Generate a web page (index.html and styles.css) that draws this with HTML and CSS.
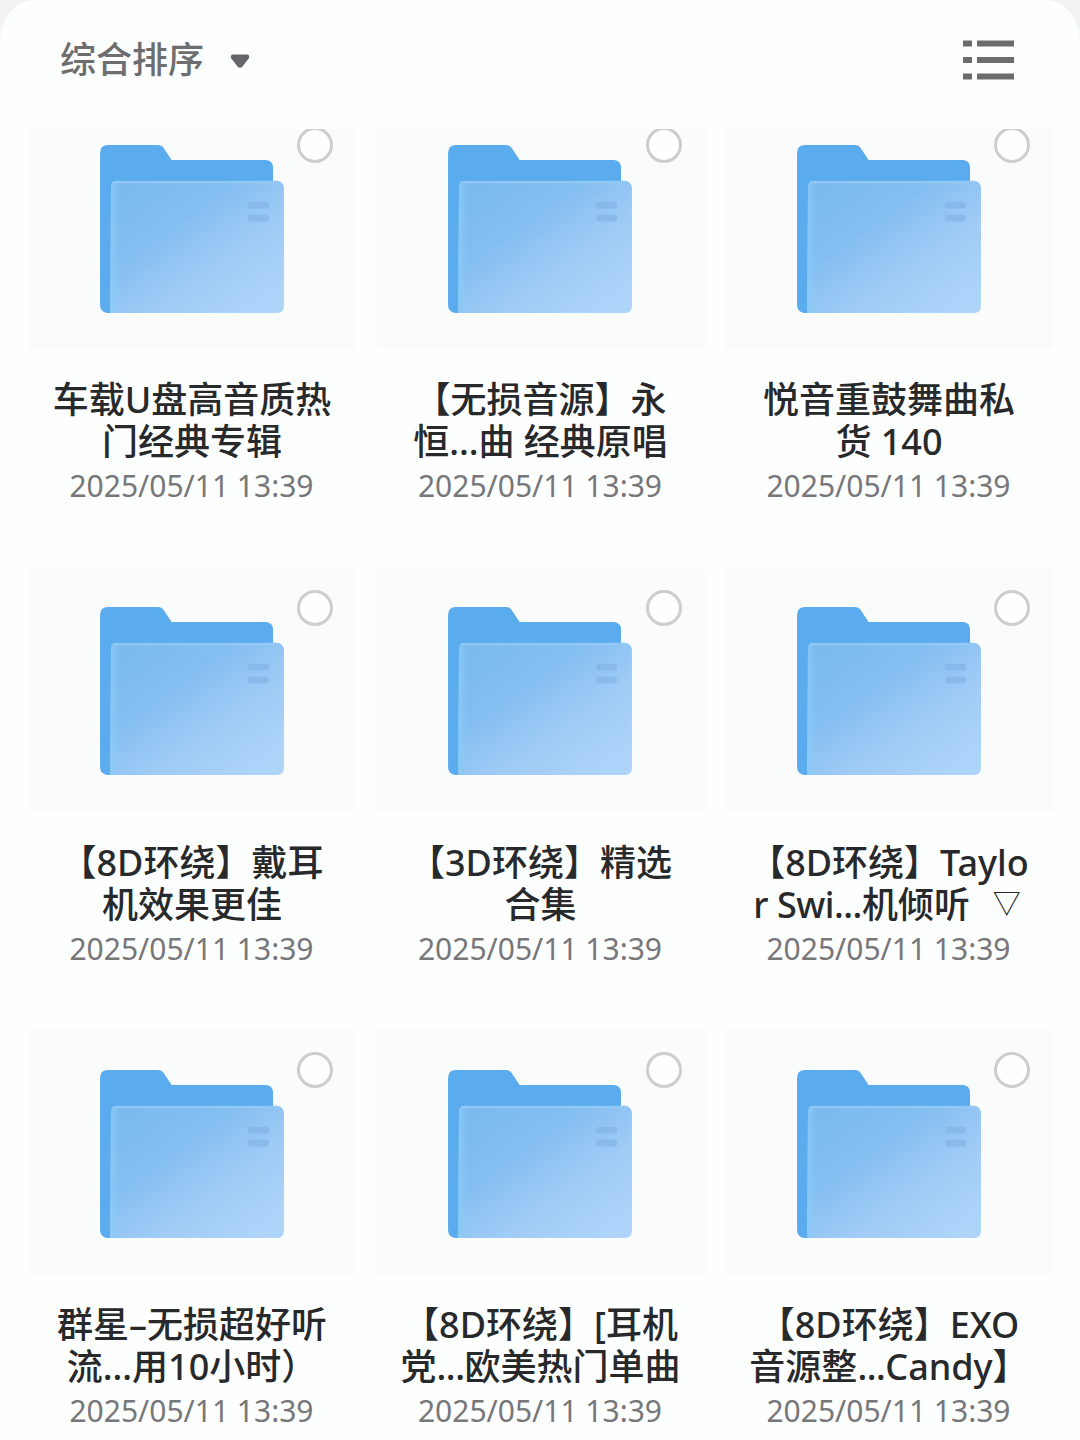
FILE: index.html
```html
<!DOCTYPE html>
<html lang="zh-CN">
<head>
<meta charset="utf-8">
<title>综合排序</title>
<link rel="stylesheet" href="styles.css">
</head>
<body>
<svg class="defs" width="0" height="0" aria-hidden="true">
  <defs>
    <linearGradient id="front" x1="0.08" y1="0.1" x2="0.88" y2="0.95">
      <stop offset="0" stop-color="#7bb9ef"/>
      <stop offset="0.3" stop-color="#83bef0"/>
      <stop offset="0.65" stop-color="#9fcbf6"/>
      <stop offset="1" stop-color="#aed4fa"/>
    </linearGradient>
    <linearGradient id="edge" x1="0" y1="0" x2="1" y2="0">
      <stop offset="0" stop-color="#8bcbf7" stop-opacity="0.9"/>
      <stop offset="1" stop-color="#8bcbf7" stop-opacity="0"/>
    </linearGradient>
    <filter id="soft" x="-20%" y="-50%" width="140%" height="200%"><feGaussianBlur stdDeviation="0.8"/></filter>
    <symbol id="folder" viewBox="0 0 186 170">
      <path d="M0 8Q0 0 8 0H58Q62 0 64 3L72 15H167Q174 15.500 174 23V80H30V169H7Q0 168 0 161Z" fill="#5aacee"/>
      <path d="M11 42Q11 36 17 36H178Q185 37 185 44V162Q185 169 178 169H10Z" fill="url(#front)"/>
      <path d="M11 42Q11 36 17 36H20V169H10Z" fill="url(#edge)"/>
      <path d="M13 37.500H179" stroke="#93c9f6" stroke-width="2"/>
      <g fill="#7eafe3" opacity="0.55" filter="url(#soft)">
        <rect x="149" y="57" width="21" height="7" rx="3"/>
        <rect x="149" y="70" width="21" height="7" rx="3"/>
      </g>
    </symbol>
  </defs>
</svg>
<main class="panel">
  <header class="toolbar">
    <div class="sort">
      <span>综合排序</span>
      <svg class="caret" width="20" height="15" viewBox="0 0 20 15"><path d="M2.500 .500H17.500Q20 1.500 19 4L12.500 12.500Q10 15 7.500 12.500L1 4Q0 1.500 2.500 .500Z" fill="#666668"/></svg>
    </div>
    <svg class="view" width="51" height="40" viewBox="0 0 51 40" fill="#6c6c6e"><path d="M0 .500h9v6H0zM14 .500h37v6H14zM0 17h9v6H0zM14 17h37v6H14zM0 33.500h9v6H0zM14 33.500h37v6H14z"/></svg>
  </header>
  <div class="viewport">
    <div class="grid">
      <article class="item"><div class="tile"><svg class="folder"><use href="#folder"/></svg><span class="check"></span></div><h2>车载U盘高音质热<br>门经典专辑</h2><time>2025/05/11 13:39</time></article>
      <article class="item"><div class="tile"><svg class="folder"><use href="#folder"/></svg><span class="check"></span></div><h2>【无损音源】永<br>恒...曲 经典原唱</h2><time>2025/05/11 13:39</time></article>
      <article class="item"><div class="tile"><svg class="folder"><use href="#folder"/></svg><span class="check"></span></div><h2>悦音重鼓舞曲私<br>货 140</h2><time>2025/05/11 13:39</time></article>
      <article class="item"><div class="tile"><svg class="folder"><use href="#folder"/></svg><span class="check"></span></div><h2>【8D环绕】戴耳<br>机效果更佳</h2><time>2025/05/11 13:39</time></article>
      <article class="item"><div class="tile"><svg class="folder"><use href="#folder"/></svg><span class="check"></span></div><h2>【3D环绕】精选<br>合集</h2><time>2025/05/11 13:39</time></article>
      <article class="item"><div class="tile"><svg class="folder"><use href="#folder"/></svg><span class="check"></span></div><h2>【8D环绕】Taylo<br><span class="tight">r Swi...</span>机倾听&nbsp; <span class="mark">▽</span></h2><time>2025/05/11 13:39</time></article>
      <article class="item"><div class="tile"><svg class="folder"><use href="#folder"/></svg><span class="check"></span></div><h2>群星–无损超好听<br>流...用10小时）</h2><time>2025/05/11 13:39</time></article>
      <article class="item"><div class="tile"><svg class="folder"><use href="#folder"/></svg><span class="check"></span></div><h2>【8D环绕】[耳机<br>党<span class="tight">...</span>欧美热门单曲</h2><time>2025/05/11 13:39</time></article>
      <article class="item"><div class="tile"><svg class="folder"><use href="#folder"/></svg><span class="check"></span></div><h2>【8D环绕】EXO<br>音源整<span class="tight">...</span>Candy】</h2><time>2025/05/11 13:39</time></article>
    </div>
  </div>
</main>
</body>
</html>
```
FILE: styles.css
```css
* { box-sizing: border-box; }
body {
  margin: 0;
  height: 1440px;
  overflow: hidden;
  background: #f3f3f5;
  font-family: "Noto Sans", "Noto Sans CJK SC", sans-serif;
  text-spacing-trim: space-all;
}
.defs { position: absolute; }
.panel {
  display: flex;
  flex-direction: column;
  height: 1440px;
  overflow: hidden;
  border-radius: 34px 34px 0 0 / 42px 42px 0 0;
  background: #fdfefe;
}
.toolbar {
  display: flex;
  flex: none;
  align-items: center;
  justify-content: space-between;
  height: 129px;
  padding: 0 66px 9px 60px;
}
.sort {
  display: flex;
  align-items: center;
  gap: 26px;
  font-size: 36px;
  font-weight: 500;
  line-height: 42px;
  color: #6e6e70;
}
.caret { margin-top: 3px; }
.viewport {
  flex: 1;
  min-height: 0;
  overflow: hidden;
}
.grid {
  display: grid;
  grid-template-columns: repeat(3, 330px);
  grid-auto-rows: 462.5px;
  column-gap: 18.5px;
  margin-top: -25px;
  padding-left: 27px;
}
.item { text-align: center; }
.tile {
  position: relative;
  height: 246px;
  padding: 40.5px 0 0 72.5px;
  border-radius: 6px;
  background: #fafbfb;
}
.folder {
  display: block;
  width: 185px;
  height: 169px;
}
.check {
  position: absolute;
  top: 23px;
  right: 24px;
  width: 36px;
  height: 36px;
  border: 3px solid #cdcdce;
  border-radius: 50%;
  background: #fdfefe;
}
h2 {
  margin: 29px -10px 0;
  font-size: 36px;
  font-weight: 500;
  line-height: 42px;
  color: #28292b;
  white-space: nowrap;
}
.tight { letter-spacing: -0.5px; }
.mark {
  display: inline-block;
  width: 36px;
  height: 28px;
  font-family: "Noto Sans CJK SC", sans-serif;
  font-size: 28px;
  font-weight: 400;
  line-height: 28px;
  vertical-align: 4px;
}
time {
  display: block;
  margin-left: -1px;
  font-size: 30px;
  line-height: 45px;
  color: #77777a;
}
```
